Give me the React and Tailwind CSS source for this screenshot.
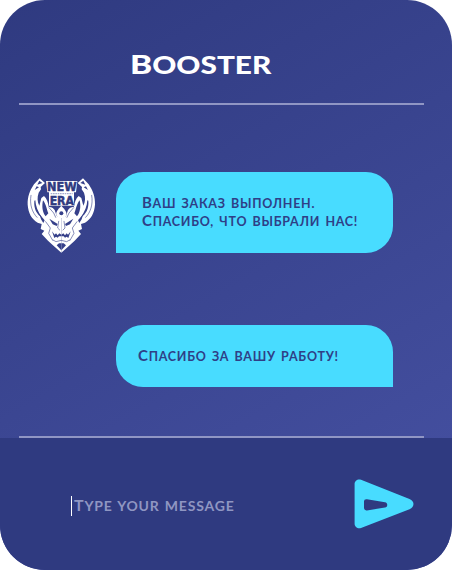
import React from "react";

// Left half of the mascot; the right half is the same group mirrored.
function MascotHalf() {
  return (
    <g strokeLinejoin="round" strokeLinecap="round">
      <path fill="#fff" d="M59 25L75 39 62 51 63 58 56 68C51 82 52 95 58 107L64 84 72 78C80 85 85 98 86 110L102 114 113 128 124 136V248L98 225 84 212 65 192 73 182 62 177 65 162 53 158C35 147 25 130 23 104 22 82 29 62 42 43Z" />
      <g fill="#36408a">
        <path d="M58 32L67 39 52 44Z" />
        <path d="M50 49L57 52 44 60Z" />
        <path d="M43 92C41 116 50 132 66 143 53 124 47 108 46 91Z" />
        <path d="M69 91C79 104 79 115 85 130L77 139C67 127 65 110 69 91Z" />
        <path d="M58 132L74 151 70 159 63 148Z" />
        <path d="M88 146L113 162 110 168 98 163Z" />
        <path d="M96 184L104 194 108 190 113 196 118 190 124 194V199H117L113 203 108 200 103 204Z" />
        <path d="M110 226L117 220H124V241Z" />
      </g>
      <g fill="none" stroke="#36408a" strokeWidth="1.8">
        <path d="M33 76C28 104 37 128 51 142M77 155L91 174 86 190 98 211M87 113L101 129 107 142M116 154L113 174 119 180M99 210L108 215 124 211" />
      </g>
    </g>
  );
}

function MascotLogo() {
  return (
    <svg viewBox="0 0 252 270" className="h-[90px] w-[84px] shrink-0" aria-label="New Era">
      <MascotHalf />
      <g transform="translate(248 0) scale(-1 1)">
        <MascotHalf />
      </g>
      <path d="M93 108H155L144 120 138 138 124 145 110 138 104 120Z" fill="#36408a" />
      <path d="M124 107C137 121 142 128 138 137 132 147 116 147 110 137 106 128 111 121 124 107Z" fill="#fff" />
      <circle cx="124" cy="130" r="6" fill="#36408a" />
      <path d="M78 33H172L168 67H162V107H87V67H82Z" fill="#fff" />
      <g
        fill="#2f3a80"
        stroke="#2f3a80"
        strokeWidth="1.5"
        className="font-['DejaVu_Sans',sans-serif] text-[35px] font-bold"
      >
        <text x="81" y="63" textLength="89" lengthAdjust="spacingAndGlyphs">NEW</text>
        <text x="89" y="104" textLength="73" lengthAdjust="spacingAndGlyphs">ERA</text>
      </g>
      <path d="M92 71H158" stroke="#a5abcf" strokeWidth="3.5" strokeDasharray="5 2" />
    </svg>
  );
}

function SendIcon() {
  return (
    <svg viewBox="0 0 60 50" className="h-[50px] w-[60px]" aria-hidden="true">
      <path
        fill="#48dcff"
        fillRule="evenodd"
        d="M.6 5C.6 1.6 4-.4 7 .8L55.5 20C60.8 22 60.8 28 55.5 30.2L7 49C4 50.2.6 48 .6 44.8ZM10 22.2V28.5Q10 31.8 13 31.4L31 28.5C34 28 34 23.8 31 23.3L13 20.2Q10 19.8 10 22.2Z"
      />
    </svg>
  );
}

export default function App() {
  return (
    <main className="h-[570px] w-[452px] overflow-hidden bg-white font-['Lato','Open_Sans',sans-serif]">
      <section className="flex h-[569.5px] flex-col overflow-hidden rounded-[45px] bg-linear-[150deg] from-[#2f3a80] to-[#434e9e] to-85%">
        <header className="mr-[28px] ml-[19px] h-[105px] shrink-0 border-b-2 border-[#9096c4] pt-[44px] pl-[111px]">
          <h1 className="origin-left scale-x-[1.24] text-[24px] leading-[42px] font-black whitespace-nowrap text-white uppercase first-letter:text-[27px] first-letter:leading-[0]">
            Booster
          </h1>
        </header>
        <div className="flex grow flex-col">
          <div className="mt-[65px] flex pl-[20px]">
            <MascotLogo />
            <div className="mt-[2px] ml-[12px] h-[81px] w-[277px] rounded-t-[27px] rounded-br-[27px] bg-[#48dcff] pt-[23px] pl-[26px] text-[12.5px] leading-[18px] font-bold tracking-[0.73px] [word-spacing:1.5px] whitespace-nowrap text-[#2f3f87] uppercase">
              <p className="first-letter:text-[15px] first-letter:leading-[0]">Ваш заказ выполнен.</p>
              <p className="first-letter:text-[15px] first-letter:leading-[0]">Спасибо, что выбрали нас!</p>
            </div>
          </div>
          <div className="mt-[65px] ml-[116px] h-[62px] w-[277px] rounded-t-[27px] rounded-bl-[27px] bg-[#48dcff] pt-[23px] pl-[22px] text-[12.5px] leading-[18px] font-bold tracking-[0.73px] [word-spacing:1.5px] whitespace-nowrap text-[#2f3f87] uppercase">
            <p className="first-letter:text-[15px] first-letter:leading-[0]">Спасибо за вашу работу!</p>
          </div>
        </div>
        <div className="mr-[28px] ml-[19px] h-[2px] shrink-0 bg-[#9096c4]" />
        <footer className="flex h-[131.5px] shrink-0 items-start bg-[#2f3a80] pt-[41px] pl-[71px]">
          <div className="mt-[17px] h-[20px] w-px bg-white" />
          <p className="mt-[18px] ml-[2px] w-[280px] text-[14px] leading-[18px] font-bold tracking-[0.8px] [word-spacing:1px] whitespace-nowrap text-[#8f96c2] uppercase first-letter:text-[16px] first-letter:leading-[0]">
            Type your message
          </p>
          <SendIcon />
        </footer>
      </section>
    </main>
  );
}
